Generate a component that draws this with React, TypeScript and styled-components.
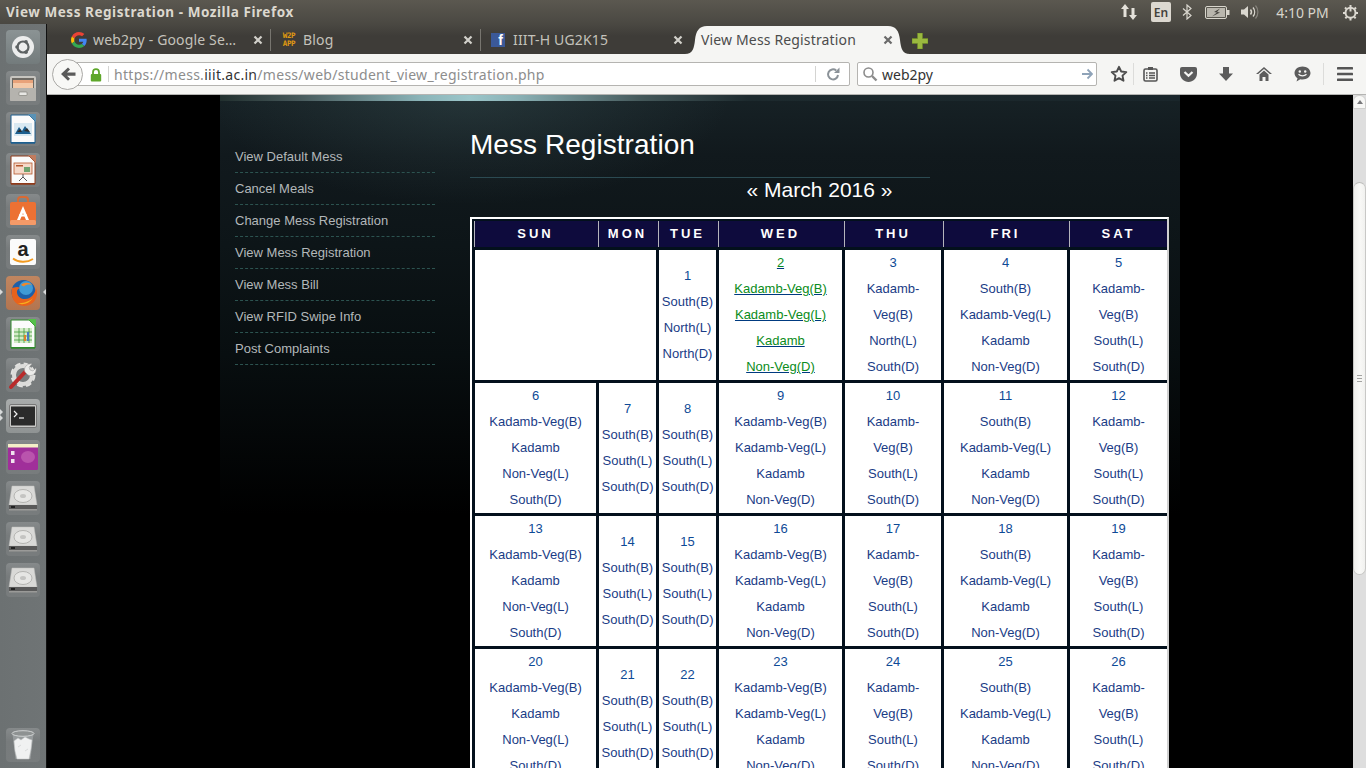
import React from 'react';
import styled, { createGlobalStyle } from 'styled-components';

const GlobalStyle = createGlobalStyle`
    html, body {
        margin: 0;
        padding: 0;
        width: 1366px;
        height: 768px;
        overflow: hidden;
        background: #000;
    }
`;

const Screen = styled.div`
    width: 1366px;
    height: 768px;
    overflow: hidden;
    display: flex;
    flex-direction: column;
    font-family: "Noto Sans", sans-serif;
`;

/* desktop title bar */
const TitleBar = styled.div`
    flex: 0 0 24px;
    display: flex;
    align-items: center;
    justify-content: space-between;
    padding: 0 4px 0 6px;
    background: linear-gradient(#5b5850, #4a4842);
`;

const WindowTitle = styled.div`
    font-size: 13.5px;
    font-weight: 700;
    color: #dcd8cf;
    letter-spacing: 0.55px;
    white-space: nowrap;
`;

const Tray = styled.div`
    display: flex;
    align-items: center;
`;

const TraySlot = styled.div<{ $w: number }>`
    width: ${p => p.$w}px;
    display: flex;
    align-items: center;
    justify-content: center;
`;

const LangBox = styled.div`
    width: 20px;
    height: 20px;
    border-radius: 2px;
    background: #dcd8d0;
    color: #44423d;
    font-size: 12px;
    font-weight: 600;
    display: flex;
    align-items: center;
    justify-content: center;
`;

const Clock = styled.div`
    font-size: 14px;
    color: #d8d5cc;
    white-space: nowrap;
`;

const Body = styled.div`
    flex: 1;
    display: flex;
    min-height: 0;
`;

/* unity launcher */
const Launcher = styled.div`
    flex: 0 0 47px;
    width: 47px;
    display: flex;
    flex-direction: column;
    gap: 7px;
    padding: 6px 0 6px 6px;
    box-sizing: border-box;
    background: linear-gradient(90deg, #6c7172, #6f7475);
    border-right: 1px solid #111;
`;

const Tile = styled.div<{ $bg?: string; $bottom?: boolean }>`
    position: relative;
    width: 34px;
    height: 34px;
    flex: 0 0 34px;
    border-radius: 4px;
    display: flex;
    align-items: center;
    justify-content: center;
    background: ${p => p.$bg || 'linear-gradient(#868a8b, #777b7c 40%, #787c7d)'};
    margin-top: ${p => (p.$bottom ? 'auto' : '0')};
`;

const Pip = styled.div<{ $side: 'left' | 'right'; $offset?: number }>`
    position: absolute;
    top: ${p => 13 + (p.$offset || 0)}px;
    ${p => (p.$side === 'left' ? 'left: -6px;' : 'right: -6px;')}
    width: 0;
    height: 0;
    border-top: 3px solid transparent;
    border-bottom: 3px solid transparent;
    ${p => (p.$side === 'left' ? 'border-left: 3px solid #d8dada;' : 'border-right: 3px solid #d8dada;')}
`;

const Browser = styled.div`
    flex: 1;
    min-width: 0;
    display: flex;
    flex-direction: column;
`;

/* firefox tabs */
const TabStrip = styled.div`
    flex: 0 0 30px;
    display: flex;
    align-items: flex-end;
    padding-left: 14px;
    background: linear-gradient(#4a4842, #3e3c38 40%);
`;

const Tab = styled.div<{ $active?: boolean }>`
    position: relative;
    box-sizing: border-box;
    width: 210px;
    height: 28px;
    flex: 0 0 210px;
    display: flex;
    align-items: center;
    gap: 6px;
    padding: 0 6px 0 10px;
    font-size: 14px;
    letter-spacing: 0.15px;
    color: ${p => (p.$active ? '#4c4c4c' : '#c4c2bb')};
`;

const TabShape = styled.svg`
    position: absolute;
    left: -6px;
    top: 0;
    width: 225px;
    height: 28px;
`;

const TabDivider = styled.div`
    position: absolute;
    right: 0;
    top: 3px;
    bottom: 3px;
    width: 1px;
    background: #77756f;
`;

const TabTitle = styled.div`
    position: relative;
    flex: 1;
    min-width: 0;
    margin-top: -2px;
    white-space: nowrap;
`;

const TabClose = styled.div`
    position: relative;
    width: 14px;
    display: flex;
    justify-content: center;
`;

const Favicon = styled.div`
    flex: 0 0 16px;
    height: 16px;
    display: flex;
`;

const W2pLogo = styled.div`
    width: 16px;
    font-family: "DejaVu Sans Mono", monospace;
    font-size: 7.5px;
    font-weight: 700;
    line-height: 8px;
    letter-spacing: -0.3px;
    color: #e09a10;
    text-align: center;
`;

const FbLogo = styled.div`
    width: 14px;
    height: 14px;
    margin: 1px 0;
    background: #3b5998;
    color: #fff;
    font-family: "Liberation Sans", sans-serif;
    font-weight: 700;
    font-size: 14px;
    line-height: 15px;
    text-align: right;
    padding-right: 2px;
    box-sizing: border-box;
`;

const NewTab = styled.div`
    margin: 0 0 5px 11px;
    display: flex;
`;

/* firefox nav bar */
const NavBar = styled.div`
    flex: 0 0 41px;
    box-sizing: border-box;
    display: flex;
    align-items: center;
    padding-left: 5px;
    background: #f5f5f3;
    border-bottom: 1px solid #b4b4b2;
`;

const BackButton = styled.div`
    position: relative;
    z-index: 1;
    flex: 0 0 31px;
    height: 31px;
    box-sizing: border-box;
    border: 1px solid #aaa9a6;
    border-radius: 50%;
    background: #f8f8f6;
    display: flex;
    align-items: center;
    justify-content: center;
`;

const UrlBar = styled.div`
    margin-left: -21px;
    flex: 0 0 788px;
    height: 24px;
    box-sizing: border-box;
    border: 1px solid #b5b4b1;
    border-radius: 2px;
    background: #fff;
    display: flex;
    align-items: center;
    padding-left: 25px;
`;

const Lock = styled.div`
    flex: 0 0 16px;
    display: flex;
    margin-right: 4px;
`;

const UrlSep = styled.div`
    width: 1px;
    height: 16px;
    background: #d4d4d2;
    flex: 0 0 1px;
`;

const UrlText = styled.div`
    flex: 1;
    padding-left: 5px;
    font-size: 14px;
    color: #8d8d8d;
    white-space: nowrap;
    letter-spacing: 0.29px;

    b {
        font-weight: 400;
        color: #333;
    }
`;

const ReloadSlot = styled.div`
    flex: 0 0 33px;
    display: flex;
    justify-content: center;
`;

const SearchBar = styled.div`
    margin-left: 7px;
    flex: 0 0 240px;
    height: 24px;
    box-sizing: border-box;
    border: 1px solid #b5b4b1;
    border-radius: 2px;
    background: #fff;
    display: flex;
    align-items: center;
    padding: 0 3px 0 4px;
    gap: 4px;
    font-size: 14px;
    color: #333;
`;

const SearchText = styled.div`
    flex: 1;
`;

const ToolSlot = styled.div<{ $w: number; $line?: boolean }>`
    flex: 0 0 ${p => p.$w}px;
    height: 22px;
    display: flex;
    align-items: center;
    justify-content: center;
    border-right: ${p => (p.$line ? '1px solid #dcdcda' : 'none')};
    box-sizing: border-box;
`;

const StarSlot = styled(ToolSlot)`
    padding-left: 8px;
`;

/* the page */
const Viewport = styled.div`
    flex: 1;
    min-height: 0;
    display: flex;
`;

const PageArea = styled.div`
    flex: 1;
    min-width: 0;
    background: #000;
    display: flex;
    justify-content: center;
    overflow: hidden;
`;

const Panel = styled.div`
    width: 960px;
    flex: 0 0 960px;
    display: flex;
    flex-direction: column;
    background:
        radial-gradient(ellipse 260px 110px at 250px 0, rgba(72, 100, 102, 0.3), rgba(72, 100, 102, 0) 100%),
        linear-gradient(#172226 0, #11191d 60px, #0d1518 150px, #080e10 260px, #000 420px);
`;

const TopBand = styled.div`
    flex: 0 0 6px;
    background: linear-gradient(90deg, #22302f 0, #46585a 8%, #8bb5b9 21%, #9bc6ca 26%, #8ab1b5 31%, #44585a 44%, #1d2a2e 55%, #1a262b 100%);
`;

const Columns = styled.div`
    flex: 1;
    display: flex;
    padding-left: 15px;
`;

const SideNav = styled.ul`
    flex: 0 0 200px;
    margin: 0;
    padding: 40px 0 0;
    list-style: none;
`;

const SideItem = styled.li`
    padding: 8px 0;
    height: 15px;
    border-bottom: 1px dashed #2c5350;
    font-family: "Liberation Sans", sans-serif;
    font-size: 13px;
    line-height: 15px;
    color: #b3b8ba;
`;

const Main = styled.div`
    margin-left: 35px;
    flex: 0 0 699px;
    padding-top: 27px;
    font-family: "Liberation Sans", sans-serif;
`;

const Heading = styled.h1`
    width: 460px;
    margin: 0;
    padding-bottom: 15px;
    border-bottom: 1px solid #2b4a52;
    font-size: 28px;
    font-weight: 400;
    line-height: 34px;
    letter-spacing: 0.05px;
    color: #fff;
`;

const MonthNav = styled.div`
    height: 24px;
    margin-bottom: 15px;
    font-size: 21px;
    line-height: 24px;
    text-align: center;
    color: #fff;
`;

const CalendarFrame = styled.div`
    width: 699px;
    box-sizing: border-box;
    border: 2px solid #fff;
    border-right-color: #d0d0d0;
    border-bottom: none;
    padding-top: 2px;
    background: #03101c;
`;

const Calendar = styled.table`
    width: 695px;
    table-layout: fixed;
    border-collapse: separate;
    border-spacing: 0;
`;

const HeadCell = styled.th<{ $first?: boolean }>`
    height: 26px;
    box-sizing: border-box;
    padding: 0 0 2px 3px;
    background: linear-gradient(90deg, ${p => (p.$first ? '#03101c' : '#0e0b3d')} 2px, #b4b4bc 2px, #b4b4bc 3px, #0e0b3d 3px);
    color: #fff;
    font-size: 13px;
    font-weight: 700;
    letter-spacing: 3px;
    text-align: center;
`;

const DayCell = styled.td`
    padding: 0;
    border-left: 3px solid #03101c;
    border-top: 3px solid #03101c;
    background: #fff;
    text-align: center;
    vertical-align: middle;
    font-size: 13px;
    line-height: 26px;
    color: #1a3c86;
    white-space: nowrap;
`;

const DayNumber = styled.div<{ $green?: boolean }>`
    color: ${p => (p.$green ? '#0a8c20' : '#0e4a96')};
    ${p => (p.$green ? 'text-decoration: underline; text-decoration-color: #003a80;' : '')}
`;

const Meal = styled.div<{ $green?: boolean }>`
    ${p => (p.$green ? 'color: #0a8c20; text-decoration: underline; text-decoration-color: #003a80;' : '')}
`;

/* page scrollbar */
const ScrollTrack = styled.div`
    flex: 0 0 13px;
    display: flex;
    flex-direction: column;
    background: #dedede;
`;

const ScrollUp = styled.div`
    flex: 0 0 14px;
    box-sizing: border-box;
    background: #f7f7f5;
    border: 1px solid #cfcfcd;
    border-radius: 6px 6px 0 0;
    display: flex;
    align-items: center;
    justify-content: center;
`;

const ScrollUpArrow = styled.div`
    width: 0;
    height: 0;
    border-left: 3px solid transparent;
    border-right: 3px solid transparent;
    border-bottom: 4px solid #77777a;
`;

const ScrollThumb = styled.div`
    margin: 73px 0 0;
    flex: 0 0 393px;
    box-sizing: border-box;
    background: linear-gradient(90deg, #efefed, #f9f9f7 50%, #f1f1ef);
    border: 1px solid #c8c8c6;
    border-top-color: #bdbdbb;
    border-radius: 7px;
    display: flex;
    flex-direction: column;
    align-items: center;
    justify-content: center;
    gap: 2px;
`;

const GripLine = styled.div`
    width: 5px;
    height: 1px;
    background: #a3a3a1;
`;

/* ---- drawings ---- */

const Google = () => (
    <svg width="16" height="16" viewBox="0 0 48 48">
        <path fill="#EA4335" d="M24 9.5c3.5 0 6.700 1.200 9.200 3.600l6.900-6.900C35.900 2.400 30.500 0 24 0 14.600 0 6.500 5.400 2.600 13.200l8 6.200C12.500 13.700 17.800 9.500 24 9.500z" />
        <path fill="#4285F4" d="M47 24.500c0-1.600-.1-3.100-.4-4.500H24v9h12.900c-.6 3-2.200 5.500-4.700 7.200l7.700 6c4.500-4.200 7.100-10.300 7.100-17.700z" />
        <path fill="#FBBC05" d="M10.500 28.600c-.5-1.400-.8-3-.8-4.600s.3-3.200.8-4.600l-8-6.200C.9 16.500 0 20.100 0 24s.9 7.500 2.600 10.800l7.900-6.200z" />
        <path fill="#34A853" d="M24 48c6.500 0 11.900-2.100 15.900-5.800l-7.700-6c-2.200 1.500-4.900 2.300-8.200 2.300-6.200 0-11.500-4.200-13.400-9.900l-8 6.200C6.500 42.600 14.600 48 24 48z" />
    </svg>
);

const CloseX = ({ color }: { color: string }) => (
    <svg width="10" height="10" viewBox="0 0 10 10">
        <path d="M1.500 1.500l7 7M8.500 1.500l-7 7" stroke={color} strokeWidth="2.200" />
    </svg>
);

const Plus = () => (
    <svg width="16" height="16" viewBox="0 0 16 16">
        <path d="M5.500 0h5v5.500H16v5h-5.500V16h-5v-5.500H0v-5h5.500z" fill="#9ab83f" stroke="#6d8a25" strokeWidth="0.600" />
    </svg>
);

const NetArrows = () => (
    <svg width="18" height="18" viewBox="0 0 18 18" fill="#e4e1da">
        <path d="M5 1l4 5H6.500v8h-3V6H1zM13 17l-4-5h2.500V5h3v7H17z" />
    </svg>
);

const Bluetooth = () => (
    <svg width="10" height="16" viewBox="0 0 10 16" fill="none" stroke="#dad7cf" strokeWidth="1.200">
        <path d="M1 4.500l8 7-4 3.500V1l4 3.500-8 7" />
    </svg>
);

const Battery = () => (
    <svg width="25" height="13" viewBox="0 0 25 13">
        <rect x="0.500" y="0.500" width="21" height="12" rx="1.500" fill="#5a5850" stroke="#d8d5cc" />
        <rect x="2" y="2" width="18" height="9" fill="#b9b6ad" />
        <rect x="22" y="4" width="2.500" height="5" fill="#d8d5cc" />
        <path d="M15 2.500L9 6l3 .5L7 10.500l8-4-3-.5z" fill="#45433e" />
    </svg>
);

const Volume = () => (
    <svg width="20" height="16" viewBox="0 0 20 16" fill="none">
        <path d="M1 5.500h3L8 2v12l-4-3.500H1z" fill="#dad7cf" />
        <path d="M10.500 5.500a4 4 0 010 5" stroke="#dad7cf" strokeWidth="1.400" />
        <path d="M13 3.500a7 7 0 010 9" stroke="#dad7cf" strokeWidth="1.300" />
        <path d="M15.500 1.500a10 10 0 010 13" stroke="#85827b" strokeWidth="1.200" />
    </svg>
);

const PowerGear = () => (
    <svg width="17" height="17" viewBox="0 0 17 17" fill="none" stroke="#dcd9d1">
        <circle cx="8.500" cy="8.800" r="5" strokeWidth="2" />
        <path d="M8.500 1v6.500" strokeWidth="2" />
        <path d="M3 3.500l1.500 1.500M14 3.500L12.500 5M1 9h2M14 9h2M3.300 14.300l1.400-1.300M13.700 14.300l-1.400-1.300M8.500 14v2.500" strokeWidth="2" />
    </svg>
);

const BackArrow = () => (
    <svg width="16" height="16" viewBox="0 0 16 16">
        <path d="M8 1.500l2 2-3 3h8.500v3.200H7l3 3-2 2L1 8z" fill="#5a5a5a" />
    </svg>
);

const Padlock = () => (
    <svg width="12" height="14" viewBox="0 0 12 14" style={{ margin: '1px 0 0 2px' }}>
        <path d="M3 6V4.200a3 3 0 016 0V6" fill="none" stroke="#5ea72a" strokeWidth="1.800" />
        <rect x="0.800" y="6" width="10.400" height="7.500" rx="1" fill="#5ea72a" />
    </svg>
);

const Reload = () => (
    <svg width="16" height="16" viewBox="0 0 16 16" fill="none">
        <path d="M13 9a5 5 0 11-1.800-4.500" stroke="#8b9298" strokeWidth="2" />
        <path d="M14.500 1.500v5.500H9z" fill="#8b9298" />
    </svg>
);

const SearchGlass = () => (
    <svg width="16" height="16" viewBox="0 0 16 16" fill="none" stroke="#8c8c8c">
        <circle cx="6.500" cy="6.500" r="4.500" strokeWidth="1.600" />
        <path d="M10 10l4.500 4.500" strokeWidth="2.400" />
    </svg>
);

const GoArrow = () => (
    <svg width="12" height="12" viewBox="0 0 12 12" fill="none" stroke="#8fa3b8" strokeWidth="1.800">
        <path d="M1 6h9.500M6.500 1.500L11 6l-4.500 4.500" />
    </svg>
);

const Star = () => (
    <svg width="18" height="18" viewBox="0 0 18 18">
        <path d="M9 1.800l2.200 4.700 5.100.6-3.800 3.500 1 5.100L9 13.200l-4.500 2.500 1-5.100L1.700 7.100l5.100-.6z" fill="none" stroke="#4d4d4d" strokeWidth="1.900" strokeLinejoin="round" />
    </svg>
);

const ReadingList = () => (
    <svg width="15" height="16" viewBox="0 0 15 16" fill="none">
        <rect x="1" y="3" width="13" height="12" rx="1.500" stroke="#555" strokeWidth="1.600" />
        <rect x="5" y="1" width="5" height="3" fill="#555" />
        <path d="M3 7h1.500M6 7h6M3 9.500h1.500M6 9.500h6M3 12h1.500M6 12h6" stroke="#555" strokeWidth="1.300" />
    </svg>
);

const Pocket = () => (
    <svg width="17" height="15" viewBox="0 0 17 15">
        <path d="M2 0h13a2 2 0 012 2v4.500C17 11 13 15 8.500 15S0 11 0 6.500V2a2 2 0 012-2z" fill="#5c5c5c" />
        <path d="M4.500 5l4 3.800 4-3.800" fill="none" stroke="#f5f5f3" strokeWidth="2.200" />
    </svg>
);

const Download = () => (
    <svg width="16" height="16" viewBox="0 0 16 16">
        <path d="M5 1h6v6.500h4L8 15 1 7.500h4z" fill="#5c5c5c" />
    </svg>
);

const Home = () => (
    <svg width="16" height="16" viewBox="0 0 16 16" fill="#5c5c5c">
        <path d="M8 1L0 8h2.200L8 3l5.800 5H16z" />
        <path d="M3.500 8.500L8 4.500l4.500 4V15H9.500v-4h-3v4h-3z" />
    </svg>
);

const Chat = () => (
    <svg width="17" height="16" viewBox="0 0 17 16">
        <path d="M8.500 0.500c4.400 0 8 2.800 8 6.500s-3.600 6.500-8 6.500c-.8 0-1.500-.1-2.200-.2L2.500 15.500l1-3.200C1.700 11.100.5 9.200.5 7 .5 3.300 4.100.5 8.500.5z" fill="#5c5c5c" />
        <circle cx="5.800" cy="5.500" r="1.200" fill="#f5f5f3" />
        <circle cx="11.200" cy="5.500" r="1.200" fill="#f5f5f3" />
        <path d="M4.500 8.300c2 2 6 2 8 0" fill="none" stroke="#f5f5f3" strokeWidth="1.300" />
    </svg>
);

const Burger = () => (
    <svg width="16" height="14" viewBox="0 0 16 14" fill="#555">
        <rect width="16" height="2.600" rx="0.600" />
        <rect y="5.700" width="16" height="2.600" rx="0.600" />
        <rect y="11.400" width="16" height="2.600" rx="0.600" />
    </svg>
);

/* launcher icons */
const DashIcon = () => (
    <svg width="26" height="26" viewBox="0 0 26 26">
        <circle cx="13" cy="13" r="11" fill="#eceded" />
        <circle cx="13" cy="13" r="5.500" fill="none" stroke="#5d6263" strokeWidth="2.200" />
        <circle cx="7" cy="13" r="1.800" fill="#5d6263" />
        <circle cx="16" cy="7.800" r="1.800" fill="#5d6263" />
        <circle cx="16" cy="18.200" r="1.800" fill="#5d6263" />
    </svg>
);

const FilesIcon = () => (
    <svg width="30" height="30" viewBox="0 0 30 30">
        <rect x="2" y="3" width="26" height="25" rx="2" fill="#c7c5c0" />
        <rect x="4" y="5" width="22" height="10" fill="#6e6a64" />
        <rect x="5" y="7" width="20" height="8" fill="#e8a27a" />
        <rect x="5" y="10" width="20" height="5" fill="#f4c9a8" />
        <rect x="2" y="15" width="26" height="13" rx="1" fill="#b5b3ae" />
        <rect x="11" y="19" width="8" height="3.500" rx="0.800" fill="#e8e7e4" stroke="#77756f" strokeWidth="0.600" />
    </svg>
);

const DocIcon = ({ edge, corner, children }: { edge: string; corner: string; children: React.ReactNode }) => (
    <svg width="26" height="30" viewBox="0 0 26 30">
        <path d="M1 1h18l6 6v22H1z" fill="#fbfbfb" stroke={edge} strokeWidth="1" />
        <path d="M18 0h8v8z" fill={corner} />
        <path d="M1 28h24v1.500H1z" fill={edge} />
        {children}
    </svg>
);

const DrawIcon = () => (
    <DocIcon edge="#1c5f8f" corner="#5a92b5">
        <rect x="4" y="9" width="18" height="13" fill="#d9e9f2" />
        <path d="M5 20l4-7 3 4 3-5 6 8z" fill="#1c5f8f" />
        <path d="M7 18l3-3 2 3zM14 17l3-3 3 4z" fill="#2e2e2e" />
    </DocIcon>
);

const ImpressIcon = () => (
    <DocIcon edge="#8f3a1a" corner="#c07c5f">
        <rect x="4" y="8" width="18" height="11" fill="#f5d8c8" stroke="#b5562c" strokeWidth="0.800" />
        <rect x="6" y="10" width="7" height="1.500" fill="#b5562c" />
        <rect x="14" y="12" width="6" height="5" fill="#6fa36f" />
        <path d="M13 19v3M13 22l-4 4M13 22l4 4" stroke="#555" strokeWidth="1" />
    </DocIcon>
);

const CalcIcon = () => (
    <DocIcon edge="#2f8a2b" corner="#55c04a">
        <rect x="4" y="9" width="18" height="15" fill="#d4ecc8" />
        <path d="M4 13h18M4 17h18M4 21h18M9 9v15M14 9v15M19 9v15" stroke="#3f9a3a" strokeWidth="0.800" />
        <rect x="14" y="16" width="2" height="6" fill="#e0812b" />
        <rect x="17" y="13" width="2" height="9" fill="#4a7cc0" />
    </DocIcon>
);

const StoreIcon = () => (
    <svg width="28" height="30" viewBox="0 0 28 30">
        <path d="M9 7V4a3 3 0 013-3h4a3 3 0 013 3v3" fill="none" stroke="#d96a33" strokeWidth="2" />
        <rect x="1" y="6" width="26" height="23" rx="2" fill="#ec7133" />
        <rect x="1" y="24" width="26" height="5" rx="1.500" fill="#f59a68" />
        <path d="M14 10l6 14h-3l-3-7-3 7H8z" fill="#fff" />
        <rect x="10" y="18.500" width="8" height="2" fill="#fff" />
    </svg>
);

const AmazonIcon = () => (
    <svg width="26" height="26" viewBox="0 0 26 26">
        <rect width="26" height="26" rx="2" fill="#fbfbfb" />
        <text x="13" y="17" textAnchor="middle" fontFamily="Liberation Sans, sans-serif" fontWeight="700" fontSize="20" fill="#222">a</text>
        <path d="M3 19.500c5 4 14 4.500 20 .5" fill="none" stroke="#f29a1f" strokeWidth="1.800" />
    </svg>
);

const FirefoxIcon = () => (
    <svg width="30" height="30" viewBox="0 0 30 30">
        <circle cx="15.500" cy="14" r="12" fill="#1d5fa8" />
        <circle cx="18" cy="10" r="7" fill="#3f9ad6" />
        <path d="M4 10c-2 9 3 18 12 18 8 0 13-6 13-13 0-2-.5-4-1-5-1 6-5 11-11 11-4 0-7-2-8-6-.5-3 1-4 3-5-3-2-6 0-8 0z" fill="#e8621c" />
        <path d="M9 25c5 2.500 12 1 16-5-3 3-10 6-16 5z" fill="#f6b01e" />
        <path d="M13 7c3-3 8-3 11 0-3-1-6-.5-8 1.500z" fill="#f0882a" />
    </svg>
);

const ToolsIcon = () => (
    <svg width="30" height="30" viewBox="0 0 30 30">
        <circle cx="15" cy="15" r="10" fill="none" stroke="#e2e2e0" strokeWidth="5" strokeDasharray="5 2.900" />
        <circle cx="15" cy="15" r="9" fill="none" stroke="#dcdcda" strokeWidth="4" />
        <path d="M3 27L18 11" stroke="#b92b2b" strokeWidth="4" strokeLinecap="round" />
        <path d="M17 12c-2-4 2-9 7-8l-3 3 1 3 3 1 3-3c1 5-4 9-8 7z" fill="#ececea" stroke="#999" strokeWidth="0.500" />
    </svg>
);

const TerminalIcon = () => (
    <svg width="28" height="24" viewBox="0 0 28 24">
        <rect x="0.500" y="0.500" width="27" height="23" rx="1.500" fill="#c9c9c7" stroke="#777" />
        <rect x="2" y="2.500" width="24" height="19" fill="#2b2b2b" />
        <path d="M5 7l3 3-3 3" fill="none" stroke="#f2f2f2" strokeWidth="1.200" />
        <path d="M10 14h5" stroke="#f2f2f2" strokeWidth="1.200" />
    </svg>
);

const TweakIcon = () => (
    <svg width="30" height="26" viewBox="0 0 30 26">
        <rect width="30" height="26" rx="1.500" fill="#a02f9a" />
        <rect x="0" y="0" width="30" height="3.500" fill="#f4efc8" />
        <rect x="3" y="7" width="3.500" height="4" fill="#f0e4ee" />
        <rect x="3" y="15" width="3.500" height="4" fill="#f0e4ee" />
        <ellipse cx="20" cy="13" rx="7" ry="6" fill="#b954ad" />
    </svg>
);

const DiskIcon = () => (
    <svg width="30" height="26" viewBox="0 0 30 26">
        <path d="M4 1h22l3 19H1z" fill="#d9d9d7" stroke="#bcbcba" strokeWidth="0.500" />
        <ellipse cx="15" cy="11" rx="9" ry="6.500" fill="#e6e6e4" stroke="#a8a8a6" strokeWidth="0.800" />
        <ellipse cx="15" cy="11" rx="3" ry="2" fill="#c4c4c2" />
        <rect x="1" y="20" width="28" height="4.500" fill="#5a5a5a" />
        <rect x="1" y="24" width="28" height="1.500" fill="#9a9a98" />
        <rect x="3" y="21" width="4" height="2" fill="#222" />
    </svg>
);

const TrashIcon = () => (
    <svg width="26" height="32" viewBox="0 0 26 32">
        <path d="M2.500 5l3 25h15l3-25z" fill="#a3a7a8" opacity="0.700" />
        <path d="M4 12l4-3 3 2 4-3 4 2 3 1-1 9-2 10H7l-2-8zM8 18l3-2M15 22l3-2" fill="#f0f1f1" stroke="#c0c3c3" strokeWidth="0.500" />
        <ellipse cx="13" cy="4.500" rx="11" ry="2.800" fill="#8e9292" stroke="#d0d3d3" />
    </svg>
);

const WEEKDAYS = ['SUN', 'MON', 'TUE', 'WED', 'THU', 'FRI', 'SAT'];
const COL_WIDTHS = [124, 60, 60, 126, 99, 126, 100];

const MENU = [
    'View Default Mess',
    'Cancel Meals',
    'Change Mess Registration',
    'View Mess Registration',
    'View Mess Bill',
    'View RFID Swipe Info',
    'Post Complaints',
];

const MEALS: string[][] = [
    ['Kadamb-Veg(B)', 'Kadamb', 'Non-Veg(L)', 'South(D)'],
    ['South(B)', 'South(L)', 'South(D)'],
    ['South(B)', 'South(L)', 'South(D)'],
    ['Kadamb-Veg(B)', 'Kadamb-Veg(L)', 'Kadamb', 'Non-Veg(D)'],
    ['Kadamb-', 'Veg(B)', 'South(L)', 'South(D)'],
    ['South(B)', 'Kadamb-Veg(L)', 'Kadamb', 'Non-Veg(D)'],
    ['Kadamb-', 'Veg(B)', 'South(L)', 'South(D)'],
];

const Day = ({ n, meals, green }: { n: number; meals: string[]; green?: boolean }) => (
    <DayCell>
        <DayNumber $green={green}>{n}</DayNumber>
        {meals.map((m, i) => <Meal key={i} $green={green}>{m}</Meal>)}
    </DayCell>
);

const App = () => {
    const weeks = [6, 13, 20];

    return (
        <Screen>
            <GlobalStyle />
            <TitleBar>
                <WindowTitle>View Mess Registration - Mozilla Firefox</WindowTitle>
                <Tray>
                    <TraySlot $w={40}><NetArrows /></TraySlot>
                    <TraySlot $w={24}><LangBox>En</LangBox></TraySlot>
                    <TraySlot $w={28}><Bluetooth /></TraySlot>
                    <TraySlot $w={32}><Battery /></TraySlot>
                    <TraySlot $w={34}><Volume /></TraySlot>
                    <TraySlot $w={71}><Clock>4:10 PM</Clock></TraySlot>
                    <TraySlot $w={24}><PowerGear /></TraySlot>
                </Tray>
            </TitleBar>
            <Body>
                <Launcher>
                    <Tile $bg="linear-gradient(#8b9394, #737b7c)"><DashIcon /></Tile>
                    <Tile><FilesIcon /></Tile>
                    <Tile><DrawIcon /></Tile>
                    <Tile><ImpressIcon /></Tile>
                    <Tile><StoreIcon /></Tile>
                    <Tile><AmazonIcon /></Tile>
                    <Tile $bg="linear-gradient(#c08660, #b37550)">
                        <Pip $side="left" />
                        <Pip $side="right" />
                        <FirefoxIcon />
                    </Tile>
                    <Tile><CalcIcon /></Tile>
                    <Tile><ToolsIcon /></Tile>
                    <Tile $bg="linear-gradient(#a9acac, #8f9393)">
                        <Pip $side="left" $offset={-3} />
                        <Pip $side="left" $offset={3} />
                        <TerminalIcon />
                    </Tile>
                    <Tile><TweakIcon /></Tile>
                    <Tile><DiskIcon /></Tile>
                    <Tile><DiskIcon /></Tile>
                    <Tile><DiskIcon /></Tile>
                    <Tile $bottom><TrashIcon /></Tile>
                </Launcher>
                <Browser>
                    <TabStrip>
                        <Tab>
                            <Favicon><Google /></Favicon>
                            <TabTitle>web2py - Google Se…</TabTitle>
                            <TabClose><CloseX color="#d2d0ca" /></TabClose>
                            <TabDivider />
                        </Tab>
                        <Tab>
                            <Favicon><W2pLogo>W2P<br />APP</W2pLogo></Favicon>
                            <TabTitle>Blog</TabTitle>
                            <TabClose><CloseX color="#d2d0ca" /></TabClose>
                            <TabDivider />
                        </Tab>
                        <Tab>
                            <Favicon><FbLogo>f</FbLogo></Favicon>
                            <TabTitle>IIIT-H UG2K15</TabTitle>
                            <TabClose><CloseX color="#d2d0ca" /></TabClose>
                        </Tab>
                        <Tab $active>
                            <TabShape viewBox="0 0 225 28">
                                <path d="M0,28 C8,28 9,22 10,14 C11,5 14,0 22,0 L203,0 C211,0 214,5 215,14 C216,22 217,28 225,28 Z" fill="#f5f5f3" />
                            </TabShape>
                            <TabTitle>View Mess Registration</TabTitle>
                            <TabClose><CloseX color="#6a6a6a" /></TabClose>
                        </Tab>
                        <NewTab><Plus /></NewTab>
                    </TabStrip>
                    <NavBar>
                        <BackButton><BackArrow /></BackButton>
                        <UrlBar>
                            <Lock><Padlock /></Lock>
                            <UrlSep />
                            <UrlText>https://mess.<b>iiit.ac.in</b>/mess/web/student_view_registration.php</UrlText>
                            <UrlSep />
                            <ReloadSlot><Reload /></ReloadSlot>
                        </UrlBar>
                        <SearchBar>
                            <SearchGlass />
                            <SearchText>web2py</SearchText>
                            <GoArrow />
                        </SearchBar>
                        <StarSlot $w={37} $line><Star /></StarSlot>
                        <ToolSlot $w={32}><ReadingList /></ToolSlot>
                        <ToolSlot $w={44}><Pocket /></ToolSlot>
                        <ToolSlot $w={32}><Download /></ToolSlot>
                        <ToolSlot $w={44}><Home /></ToolSlot>
                        <ToolSlot $w={32}><Chat /></ToolSlot>
                        <ToolSlot $w={6} $line />
                        <ToolSlot $w={42}><Burger /></ToolSlot>
                    </NavBar>
                    <Viewport>
                        <PageArea>
                            <Panel>
                                <TopBand />
                                <Columns>
                                    <SideNav>
                                        {MENU.map(item => <SideItem key={item}>{item}</SideItem>)}
                                    </SideNav>
                                    <Main>
                                        <Heading>Mess Registration</Heading>
                                        <MonthNav>« March 2016 »</MonthNav>
                                        <CalendarFrame>
                                            <Calendar>
                                                <colgroup>
                                                    {COL_WIDTHS.map((w, i) => <col key={i} width={w} />)}
                                                </colgroup>
                                                <thead>
                                                    <tr>
                                                        {WEEKDAYS.map((d, i) => <HeadCell key={d} $first={i === 0}>{d}</HeadCell>)}
                                                    </tr>
                                                </thead>
                                                <tbody>
                                                    <tr>
                                                        <DayCell colSpan={2} />
                                                        <Day n={1} meals={['South(B)', 'North(L)', 'North(D)']} />
                                                        <Day n={2} meals={MEALS[3]} green />
                                                        <Day n={3} meals={['Kadamb-', 'Veg(B)', 'North(L)', 'South(D)']} />
                                                        <Day n={4} meals={MEALS[5]} />
                                                        <Day n={5} meals={MEALS[6]} />
                                                    </tr>
                                                    {weeks.map(start => (
                                                        <tr key={start}>
                                                            {MEALS.map((meals, i) => <Day key={i} n={start + i} meals={meals} />)}
                                                        </tr>
                                                    ))}
                                                </tbody>
                                            </Calendar>
                                        </CalendarFrame>
                                    </Main>
                                </Columns>
                            </Panel>
                        </PageArea>
                        <ScrollTrack>
                            <ScrollUp><ScrollUpArrow /></ScrollUp>
                            <ScrollThumb>
                                <GripLine />
                                <GripLine />
                                <GripLine />
                            </ScrollThumb>
                        </ScrollTrack>
                    </Viewport>
                </Browser>
            </Body>
        </Screen>
    );
};

export default App;
